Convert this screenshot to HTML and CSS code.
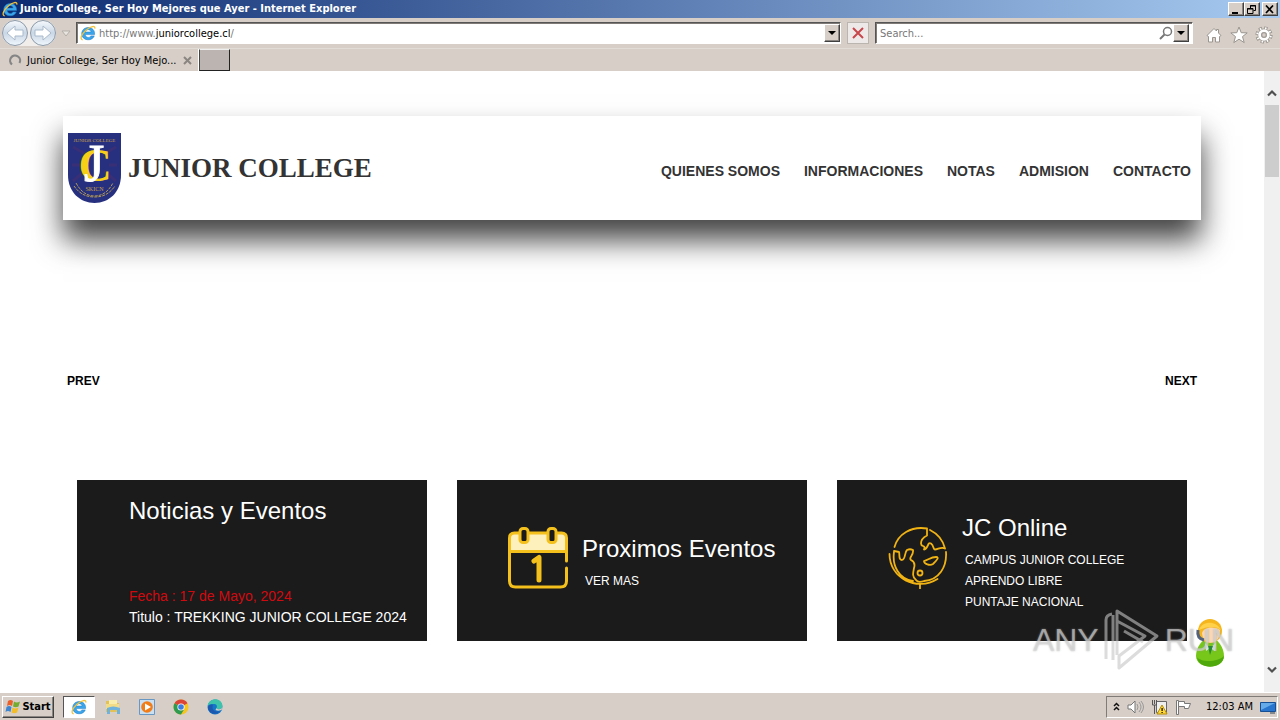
FILE: index.html
```html
<!DOCTYPE html>
<html lang="es">
<head>
<meta charset="utf-8">
<title>Junior College, Ser Hoy Mejores que Ayer</title>
<link rel="stylesheet" href="styles.css">
</head>
<body>
<svg class="defs" aria-hidden="true">
  <symbol id="ie" viewBox="0 0 16 16">
    <path d="M14.600 9.600H5.200c.3 3.300 4.600 3.700 5.600 1.300h3.500c-2.300 6-12.800 5-12.600-2.400C1.900.4 15.400.2 14.600 9.600zM5.300 7h5.800C10.700 3.900 5.800 3.900 5.300 7z" fill="#3aa5ea" stroke="#1d78c4" stroke-width=".5"/>
    <path d="M2.700 14.800C-.3 14.600 1 9.500 6 5.200 10.800 1 15.500.2 14.800 3.600" fill="none" stroke="#f2c23a" stroke-width="1.300"/>
  </symbol>
</svg>

<header class="titlebar">
  <svg class="icon16"><use href="#ie"/></svg>
  <h1 class="window-title">Junior College, Ser Hoy Mejores que Ayer - Internet Explorer</h1>
  <div class="window-buttons">
    <button class="classic" aria-label="Minimize"><svg width="10" height="9"><path d="M1 7h6v2H1z"/></svg></button>
    <button class="classic" aria-label="Restore"><svg width="10" height="9"><path d="M3.500 3V.5h5v5H6.500M3 1h6M.5 3.500h5.500v5H.5zM0 4h6" fill="none" stroke="#000"/></svg></button>
    <button class="classic apart" aria-label="Close"><svg width="10" height="9"><path d="M1 .5l7 7.500M8 .5L1 8" stroke="#000" stroke-width="1.700"/></svg></button>
  </div>
</header>

<div class="toolbar">
  <div class="history">
    <button class="round" aria-label="Back"><svg viewBox="0 0 24 24"><path d="M4 12l8-7v4h8v6h-8v4z" fill="#fff" stroke="#a9bacb"/></svg></button>
    <button class="round" aria-label="Forward"><svg viewBox="0 0 24 24"><path d="M20 12l-8-7v4H4v6h8v4z" fill="#fff" stroke="#a9bacb"/></svg></button>
  </div>
  <button class="plain recent" aria-label="Recent pages"><svg width="10" height="7"><path d="M1 1h8L5 6z" fill="#e8e4e0" stroke="#b4afa8"/></svg></button>
  <div class="field address">
    <svg class="icon16"><use href="#ie"/></svg>
    <div class="url" role="textbox" aria-label="Address" contenteditable="true">http://www.<span class="domain">juniorcollege.cl</span>/</div>
    <button class="classic drop" aria-label="Show addresses"><svg width="8" height="5"><path d="M0 0h8L4 4z"/></svg></button>
  </div>
  <button class="stop" aria-label="Stop"><svg width="12" height="12"><path d="M1 1l10 10M11 1L1 11" stroke="#c8474b" stroke-width="2"/></svg></button>
  <div class="field search">
    <input type="text" placeholder="Search..." aria-label="Search">
    <svg width="14" height="14"><circle cx="8.500" cy="5.500" r="4" fill="none" stroke="#777" stroke-width="1.500"/><path d="M5.500 8.500L1 13" stroke="#777" stroke-width="2"/></svg>
    <button class="classic drop" aria-label="Search options"><svg width="8" height="5"><path d="M0 0h8L4 4z"/></svg></button>
  </div>
  <div class="tools">
    <button class="plain" aria-label="Home"><svg width="18" height="18" viewBox="0 0 18 18"><path d="M2 9.500L9 2.500l2.500 2.500V3.500h2V7L16 9.500l-1.500 1V16h-4v-4.500h-3V16h-4v-5.500z" fill="#fff" stroke="#9a958f"/></svg></button>
    <button class="plain" aria-label="Favorites"><svg width="18" height="18" viewBox="0 0 18 18"><path d="M9 1l2.200 5.700 6 .2-4.700 3.700 1.700 6L9 13.200l-5.200 3.400 1.700-6L.8 6.900l6-.2z" fill="#fff" stroke="#9a958f"/></svg></button>
    <button class="plain" aria-label="Tools"><svg width="18" height="18" viewBox="0 0 18 18"><circle cx="9" cy="9" r="6.800" fill="none" stroke="#9a958f" stroke-width="3.600" stroke-dasharray="3.200 2.140"/><circle cx="9" cy="9" r="4.500" fill="none" stroke="#9a958f" stroke-width="4"/><circle cx="9" cy="9" r="6.800" fill="none" stroke="#fff" stroke-width="2" stroke-dasharray="1.600 3.740" stroke-dashoffset="-.8"/><circle cx="9" cy="9" r="4.400" fill="none" stroke="#fff" stroke-width="2.800"/><circle cx="9" cy="9" r="2.300" fill="#d6cec7" stroke="#9a958f"/></svg></button>
  </div>
</div>

<div class="tabs">
  <div class="tab">
    <svg width="14" height="14"><path d="M4 11.500A5 5 0 1 1 11.500 10" fill="none" stroke="#858585" stroke-width="2.200"/></svg>
    <span class="tab-title">Junior College, Ser Hoy Mejo...</span>
    <button class="plain" aria-label="Close tab"><svg width="9" height="9"><path d="M1 1l7 7M8 1L1 8" stroke="#8a8580" stroke-width="2"/></svg></button>
  </div>
  <button class="new-tab" aria-label="New tab"></button>
</div>

<div class="viewport">
  <main class="page">
    <header class="site-header">
      <a class="brand" href="#">
        <svg class="crest" viewBox="0 0 53 70" aria-hidden="true">
          <path d="M0 0h53v42c0 17-12 28-26.500 28S0 59 0 42z" fill="#27307f"/>
          <path d="M5 14l14 8M48 14l-14 8M5 48l12-10M48 48L36 38M4 32h8M49 32h-8" stroke="#4a2f6e" stroke-width="3" opacity=".5"/>
          <text x="26.500" y="9" class="crest-name">JUNIOR COLLEGE</text>
          <text x="27" y="48" class="crest-c">C</text>
          <text x="26" y="48" class="crest-j">J</text>
          <text x="26.500" y="58" class="crest-motto">SKICN</text>
          <path d="M8 50c5 9 11 13 18.500 13S40 59 45 50M6 53c5 7 11 11 20.500 11S42 60 47 53" fill="none" stroke="#b39a55" stroke-width="1" stroke-dasharray="3 1"/>
        </svg>
        <span>JUNIOR COLLEGE</span>
      </a>
      <nav class="site-nav">
        <a href="#">QUIENES SOMOS</a><a href="#">INFORMACIONES</a><a href="#">NOTAS</a><a href="#">ADMISION</a><a href="#">CONTACTO</a>
      </nav>
    </header>

    <div class="slider">
      <button class="slide-link">PREV</button>
      <button class="slide-link">NEXT</button>
    </div>

    <section class="cards">
      <article class="card news">
        <h2>Noticias y Eventos</h2>
        <div class="news-item"><p class="date">Fecha : 17 de Mayo, 2024</p><p>Titulo : TREKKING JUNIOR COLLEGE 2024</p></div>
      </article>
      <article class="card feature">
        <svg class="card-icon" viewBox="0 0 60 62" fill="none" aria-hidden="true">
          <path d="M2 25V11q0-5 5-5h46q5 0 5 5v14z" fill="#fdf0bd"/>
          <path d="M58.500 34V11q0-5-5-5h-47q-5 0-5 5v43q0 6 6 6h45q6 0 6-6V41M2 24.500h56" stroke="#f3c01c" stroke-width="3" stroke-linecap="round"/>
          <rect x="12" y="1.500" width="8" height="14" rx="3" fill="#1b1b1b" stroke="#f3c01c" stroke-width="3"/>
          <rect x="40" y="1.500" width="8" height="14" rx="3" fill="#1b1b1b" stroke="#f3c01c" stroke-width="3"/>
          <path d="M26 34l5-3.500V53" stroke="#f3c01c" stroke-width="5" stroke-linecap="round" stroke-linejoin="round"/>
        </svg>
        <div class="card-text"><h2>Proximos Eventos</h2><ul><li><a href="#">VER MAS</a></li></ul></div>
      </article>
      <article class="card feature">
        <svg class="card-icon" viewBox="0 0 60 62" fill="none" stroke="#f0b313" stroke-width="1.800" stroke-linecap="round" stroke-linejoin="round" aria-hidden="true">
          <path d="M6.500 20C10 7 23-1 39 1.500v7c-4 2-6 5-6 8 0 4 5 1 3 6 5-1 3-8 7-6 3 2 2 6 4 6 3 0 6-3 10-1M42 3c8 4 13 10 15 18.500M58 25c1 15-7 28-22 29-3 1-6 2-8-1M6 24l5 1c1 2-1 8 3 8 4-1 2-7 5-10 2-1 4-1 6 0 1 6-5 7-2 10 4 2 4 5 3 8-1 5-2 9 2 12"/>
          <path d="M6 25c-2 14 5 27 19 29M1.500 27c0 24 27 38 48 25M32 57v4.500M36 34c4-1 7-4 12-4 4 0 0 4-3 7-3 2-9 0-9-3z"/>
          <circle cx="32" cy="46" r="2.500"/>
        </svg>
        <div class="card-text"><h2>JC Online</h2><ul><li><a href="#">CAMPUS JUNIOR COLLEGE</a></li><li><a href="#">APRENDO LIBRE</a></li><li><a href="#">PUNTAJE NACIONAL</a></li></ul></div>
      </article>
    </section>
  </main>

  <div class="scrollbar" aria-hidden="true">
    <svg width="12" height="8"><path d="M2 6.500l4-4 4 4" fill="none" stroke="#505050" stroke-width="2.200"/></svg>
    <div class="thumb"></div>
    <svg class="down" width="12" height="8"><path d="M2 1.500l4 4 4-4" fill="none" stroke="#505050" stroke-width="2.200"/></svg>
  </div>

  <svg class="helper" viewBox="0 0 32 50" aria-label="Chat">
    <path d="M16 20c8 0 14 10 14 18 0 14-28 14-28 0 0-8 6-18 14-18z" fill="#76c71a"/>
    <path d="M3 39c3 5 20 6 27-1-1 14-26 14-27 1z" fill="#4fa90d"/>
    <circle cx="16" cy="13" r="12" fill="#f5b51c"/>
    <path d="M8 15c2-6 12-7 18-3 1 16-17 17-18 3z" fill="#fbd9b5"/>
    <path d="M5 12C8 3 22 2 27 12c-5-4-13-4-22 0z" fill="#ffd04a"/>
    <path d="M4 12c-1 6 1 9 6 10" fill="none" stroke="#53627c" stroke-width="3"/>
    <path d="M11 25l5 5 6-5-1 8-5-3-4 3z" fill="#dff1f4"/><path d="M14 28l2 9 3-9z" fill="#288a32"/>
  </svg>
  <div class="watermark" aria-label="ANY RUN">
    <span>ANY</span>
    <svg width="58" height="64" viewBox="0 0 58 64" fill="none" stroke="#c4c4c4" stroke-opacity=".6" stroke-width="3" stroke-linejoin="round"><path d="M3 51V12q0-5 6-6M10 52V7M14 17V3l40 25-38 32V48l26-20-28-15v34M21 23l19 11"/></svg>
    <span>RUN</span>
  </div>
</div>

<footer class="taskbar">
  <button class="classic start">
    <svg width="17" height="17" viewBox="0 0 17 17"><path d="M3 3c2-1.500 3-1.500 5 0L7 8C5 6.500 4 6.500 2 8z" fill="#e9602b"/><path d="M9 3.500c2 1.500 4 1 6 0l-1.500 5c-2 1-3.500 1-5.500 0z" fill="#73ac31"/><path d="M1.500 9c2-1.500 3-1.500 5 0l-1 5c-2-1.500-3-1.500-5 0z" fill="#3d85d0"/><path d="M7.500 9.500c2 1.500 4 1 6 0l-1.500 5c-2 1-3.500 1-5.500 0z" fill="#f3bd29"/></svg>
    Start</button>
  <div class="launch">
    <button class="plain task active" aria-label="Internet Explorer"><svg class="icon16"><use href="#ie"/></svg></button>
    <button class="plain task" aria-label="Explorer"><svg width="16" height="16"><path d="M1 2h5l1 2h7v9H1z" fill="#e3c15a"/><path d="M4 1h8v6H4z" fill="#f8edab"/><path d="M1 5h13v5H1z" fill="#f3dc86"/><path d="M2 9q6-3 13 0v6h-3v-4H5v4H2z" fill="#6fb3dd"/></svg></button>
    <button class="plain task" aria-label="Media Player"><svg width="16" height="16"><path d="M.5.5h15v15H.5z" fill="#c9dff2" stroke="#6997c4"/><circle cx="8" cy="8" r="5.800" fill="#f07d17"/><path d="M6 4.500v7L12 8z" fill="#fff"/></svg></button>
    <button class="plain task" aria-label="Chrome"><svg width="16" height="16"><circle cx="8" cy="8" r="7.500" fill="#f6c51f"/><path d="M8 8L1.500 4.300a7.500 7.500 0 0 1 13 0z" fill="#dc4437"/><path d="M8 8L1.500 4.300A7.500 7.500 0 0 0 8 15.500l3-5z" fill="#2f9b50"/><circle cx="8" cy="8" r="3.600" fill="#fff"/><circle cx="8" cy="8" r="2.800" fill="#3d7de0"/></svg></button>
    <button class="plain task" aria-label="Edge"><svg width="16" height="16"><circle cx="8" cy="8" r="7.500" fill="#1475c9"/><path d="M.5 7C2-2 15-2 15.500 7c0 4-5 4-6 2 1-2 0-4-2-4-3 0-5 0-7 2z" fill="#3ec2ac"/><path d="M6 6c-2 4 2 8 7 6-3 5-12 3-12-4 1-2 3-3 5-2z" fill="#1d58ae"/><path d="M9.500 9c1 2 6 2 6-2v3c-2 2-5 2-7 1z" fill="#d6cec7"/></svg></button>
  </div>
  <div class="tray">
    <svg width="7" height="9"><path d="M1 4l2.500-2.500L6 4M1 8l2.500-2.500L6 8" fill="none" stroke="#111" stroke-width="1.500"/></svg>
    <svg width="17" height="16"><path d="M1 6h3l4-4v12l-4-4H1z" fill="#fff" stroke="#777"/><path d="M10 5q2 3 0 6M12 3q4 5 0 10M14 2q5 6 0 12" fill="none" stroke="#999"/></svg>
    <svg width="17" height="16"><path d="M5.500 2.500h10v11h-10z" fill="#eee" stroke="#666"/><path d="M1.500 1v5h4V1M3.500 6v9M3.500 1v4" fill="none" stroke="#555"/><path d="M11 6l5 9H6z" fill="#ffd83b" stroke="#b58c00"/><path d="M10.500 9h1.200v3h-1.200zM10.500 13h1.200v1h-1.200z"/></svg>
    <svg width="17" height="16"><path d="M1.500 1.500h2v14h-2z" fill="#fff" stroke="#777"/><path d="M3.500 2.500h6v2h6l-2 5h-4v-2h-6z" fill="#fff" stroke="#777"/></svg>
    <time>12:03 AM</time>
    <svg width="16" height="14"><path d="M.5 2.500h15v9H.5z" fill="#2875cd" stroke="#174f94"/><path d="M1 3h14L1 10z" fill="#65abe9"/><path d="M10 13h5" stroke="#345"/></svg>
  </div>
</footer>
</body>
</html>
```
FILE: styles.css
```css
* { box-sizing: border-box; }
body {
  margin: 0;
  height: 100vh;
  display: flex;
  flex-direction: column;
  overflow: hidden;
  background: #d6cec7;
  color: #000;
  font: 11px "DejaVu Sans Condensed", "DejaVu Sans", sans-serif;
}
h1, h2, p, ul { margin: 0; padding: 0; }
ul { list-style: none; }
a { color: inherit; text-decoration: none; }
button { padding: 0; font: inherit; color: inherit; }
svg { display: block; flex: none; }
.defs { position: absolute; width: 0; height: 0; }
.icon16 { width: 16px; height: 16px; }

.classic {
  display: flex;
  align-items: center;
  justify-content: center;
  background: #d6cec7;
  border: 1px solid;
  border-color: #fff #404040 #404040 #fff;
  box-shadow: inset -1px -1px #8a8580;
}
.plain { display: flex; align-items: center; justify-content: center; background: none; border: 0; }

.titlebar {
  display: flex;
  align-items: center;
  height: 18px;
  padding: 0 2px;
  background: linear-gradient(to right, #0c2a70, #a6caf0);
}
.window-title { flex: 1; padding-left: 2px; color: #fff; font-size: 11px; line-height: 18px; white-space: nowrap; }
.window-buttons { display: flex; }
.window-buttons .classic { width: 16px; height: 14px; }
.window-buttons .apart { margin-left: 2px; }

.toolbar { display: flex; align-items: center; height: 30px; padding: 0 6px 0 2px; }
.history { display: flex; gap: 2px; border-radius: 14px; background: #f0edeb; }
.round {
  width: 26px;
  height: 26px;
  border: 1px solid #8c99a8;
  border-radius: 50%;
  background: linear-gradient(#f4f8fc, #c9d7e5 50%, #eef5fc);
}
.recent { width: 20px; height: 20px; }
.field {
  display: flex;
  align-items: center;
  height: 22px;
  background: #fff;
  border: 1px solid;
  border-color: #555 #fff #fff #555;
  box-shadow: inset 1px 1px #807b77;
}
.address { flex: 1; padding-left: 3px; }
.url { flex: 1; padding-left: 3px; color: #777; white-space: nowrap; }
.domain { color: #000; }
.drop { width: 16px; height: 18px; }
.stop {
  display: flex;
  align-items: center;
  justify-content: center;
  width: 22px;
  height: 22px;
  margin: 0 6px;
  background: #eee9e9;
  border: 1px solid #bbb5b0;
}
.search { width: 318px; padding-right: 3px; }
.search input {
  flex: 1;
  min-width: 0;
  padding: 0 4px;
  border: 0;
  background: none;
  font: inherit;
}
.search input::placeholder { color: #777; opacity: 1; }
.tools { display: flex; gap: 7px; padding: 3px 1px 0 12px; }

.tabs { display: flex; height: 23px; border-top: 1px solid #e2dcd6; }
.tab { display: flex; align-items: center; width: 199px; padding: 0 6px 0 8px; border-right: 1px solid #fff; }
.tab-title { flex: 1; padding-left: 5px; white-space: nowrap; }
.new-tab {
  width: 31px;
  height: 22px;
  background: #bbb4b1;
  border: 1px solid;
  border-color: #eee #222 #222 #444;
}

.viewport { position: relative; display: flex; flex: 1; min-height: 0; background: #fff; }
.page { flex: 1; padding: 45px 63px 0; font-family: "Liberation Sans", Arial, sans-serif; overflow: hidden; }
.site-header {
  display: flex;
  align-items: center;
  justify-content: space-between;
  padding: 17px 10px 17px 5px;
  background: #fff;
  box-shadow: 0 20px 28px #444;
  color: #333;
  font-weight: bold;
}
.brand { display: flex; align-items: center; gap: 7px; font: bold 27px "Liberation Serif", "Times New Roman", serif; }
.crest { width: 53px; height: 70px; font-weight: normal; }
.crest text { text-anchor: middle; font-family: "Liberation Serif", serif; }
.crest-name { font-size: 5px; fill: #c9a24a; }
.crest-c { font-size: 46px; font-weight: bold; fill: #f6cf16; }
.crest-j { font-size: 52px; fill: #fff; stroke: #fff; }
.crest-motto { font-size: 6px; fill: #c9a24a; }
.site-nav { display: flex; gap: 24px; padding-top: 6px; font-size: 14px; }
.slider { display: flex; align-items: center; justify-content: space-between; height: 200px; margin-top: 60px; padding: 1px 4px 0; }
.slide-link { border: 0; background: none; font-size: 12px; font-weight: bold; }

.cards { display: grid; grid-template-columns: repeat(3, 1fr); gap: 30px; padding: 0 14px; }
.card { display: flex; min-height: 161px; background: #1b1b1b; color: #fff; }
.card h2 { font-size: 24px; font-weight: normal; line-height: 28px; white-space: nowrap; }
.news { flex-direction: column; justify-content: space-between; padding: 17px 0 13px 52px; }
.news-item { font-size: 14px; line-height: 21px; white-space: nowrap; }
.date { color: #d10a10; }
.feature { align-items: center; gap: 14px; padding: 0 0 5px 51px; }
.card-icon { width: 60px; height: 62px; }
.card-text { margin-top: 11px; }
.card-text ul { padding: 8px 0 0 3px; font-size: 12px; line-height: 21px; }

.scrollbar { display: flex; flex-direction: column; align-items: center; gap: 8px; width: 16px; padding: 18px 0; background: #f0f0f0; }
.thumb { width: 14px; height: 72px; background: #cdcdcd; }
.down { margin-top: auto; }

.helper { position: absolute; right: 54px; bottom: 24px; width: 32px; height: 50px; }
.watermark {
  position: absolute;
  right: 46px;
  bottom: 20px;
  display: flex;
  align-items: center;
  gap: 4px;
  color: rgba(220, 220, 220, 0.6);
  font: 32px "Liberation Sans", Arial, sans-serif;
  text-shadow: 0 0 2px rgba(150, 150, 150, 0.6);
}

.taskbar { display: flex; align-items: center; height: 28px; padding: 2px; border-top: 1px solid #fff; box-shadow: 0 -1px #d6cec7; }
.start { width: 52px; height: 22px; font-weight: bold; }
.launch { display: flex; gap: 2px; padding-left: 9px; }
.task { width: 32px; height: 22px; }
.task.active { background: #fff; border: 1px solid; border-color: #555 #fff #fff #555; }
.tray {
  display: flex;
  align-items: center;
  gap: 7px;
  height: 22px;
  margin-left: auto;
  padding: 0 1px 0 6px;
  border: 1px solid;
  border-color: #807b77 #fff #fff #807b77;
}
.tray time { padding-left: 7px; }
```
